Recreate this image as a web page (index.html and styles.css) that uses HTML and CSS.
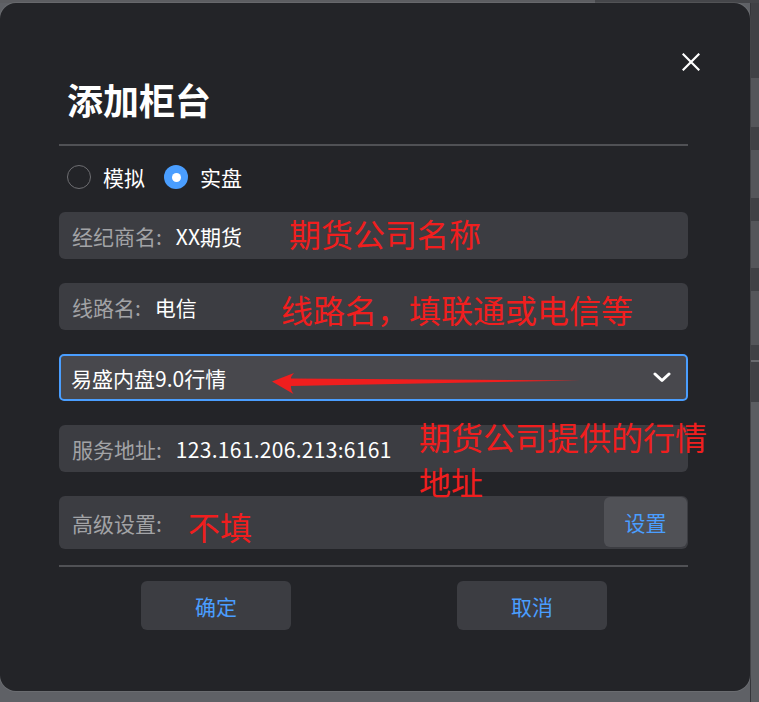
FILE: index.html
```html
<!DOCTYPE html>
<html lang="zh-CN">
<head>
<meta charset="utf-8">
<title>添加柜台</title>
<link rel="stylesheet" href="styles.css">
</head>
<body>
<div class="app">
  <div class="app-top"><div class="app-top-left"></div><div class="app-top-right"></div></div>
  <div class="app-body">
    <div class="app-main"></div>
    <div class="app-side">
      <div class="row dark r1"></div>
      <div class="row light r2"></div>
      <div class="row dark r3"></div>
      <div class="row light r4"></div>
      <div class="row dark r5"></div>
      <div class="row light r6"></div>
      <div class="row dark r7"></div>
      <div class="row light r8"></div>
      <div class="row dark r9"></div>
      <div class="row line r10"></div>
      <div class="row dark r11"></div>
      <div class="row rest"></div>
    </div>
  </div>
</div>

<div class="dialog">
  <button class="close" type="button" aria-label="关闭">
    <svg viewBox="0 0 18 18" width="18" height="18"><path d="M1.5 1.5 L16.5 16.5 M16.5 1.5 L1.5 16.5" stroke="#ffffff" stroke-width="2.2" stroke-linecap="square" fill="none"/></svg>
  </button>
  <h1 class="title">添加柜台</h1>
  <div class="rule"></div>
  <div class="radios">
    <label class="radio"><span class="circle"></span><span class="radio-text">模拟</span></label>
    <label class="radio checked"><span class="circle"></span><span class="radio-text">实盘</span></label>
  </div>
  <div class="fields">
    <div class="field"><span class="label">经纪商名:</span><span class="value">XX期货</span></div>
    <div class="field"><span class="label">线路名:</span><span class="value">电信</span></div>
    <div class="select"><span class="select-text">易盛内盘9.0行情</span>
      <svg class="chevron" viewBox="0 0 18 11" width="18" height="11"><path d="M2 2 L9 8.5 L16 2" stroke="#ffffff" stroke-width="3" fill="none" stroke-linecap="round" stroke-linejoin="round"/></svg>
    </div>
    <div class="field"><span class="label">服务地址:</span><span class="value value-addr">123.161.206.213:6161</span></div>
    <div class="field field-adv"><span class="label">高级设置:</span><button class="set-btn" type="button">设置</button></div>
  </div>
  <div class="rule rule-bottom"></div>
  <div class="actions">
    <button class="act" type="button">确定</button>
    <button class="act" type="button">取消</button>
  </div>
</div>

<div class="note note-broker">期货公司名称</div>
<div class="note note-line">线路名，填联通或电信等</div>
<div class="note note-addr">期货公司提供的行情<br>地址</div>
<div class="note note-adv">不填</div>
<svg class="arrow" viewBox="0 0 330 40" width="330" height="40">
  <path d="M7 16.5 L29 8 Q25.5 12 26 13.5 L315 15.5 L26 21 Q25.5 25 28.5 29 Z" fill="#f01e1e"/>
</svg>
</body>
</html>
```

FILE: styles.css
```css
* { box-sizing: border-box; }

html, body {
  margin: 0;
  padding: 0;
}

body {
  width: 759px;
  height: 702px;
  overflow: hidden;
  position: relative;
  background: #5f6166;
  font-family: "Noto Sans CJK SC", "Noto Sans", sans-serif;
}

/* ---------- dimmed application behind the modal ---------- */
.app {
  display: flex;
  flex-direction: column;
  height: 702px;
}
.app-top {
  display: flex;
  height: 3px;
}
.app-top-left { width: 595px; background: #5c5d61; }
.app-top-right { flex: 1; background: #45464a; }
.app-body {
  display: flex;
  flex: 1;
}
.app-main { flex: 1; background: #5f6166; }
.app-side {
  width: 9px;
  display: flex;
  flex-direction: column;
  border-left: 1px solid #35363a;
}
.row.dark { background: #404145; }
.row.light { background: #55565a; }
.row.line { background: #6a6b6f; }
.r1 { height: 75px; }
.r2 { height: 49px; }
.r3 { height: 23px; }
.r4 { height: 48px; }
.r5 { height: 23px; }
.r6 { height: 47px; }
.r7 { height: 23px; }
.r8 { height: 54px; }
.r9 { height: 15px; }
.r10 { height: 2px; }
.r11 { height: 40px; }
.rest { flex: 1; background: #5b5d61; }

/* ---------- dialog ---------- */
.dialog {
  position: absolute;
  left: 0;
  top: 3px;
  width: 750px;
  height: 688px;
  border-radius: 16px;
  background: #232428;
  box-shadow: 0 0 0 1px rgba(255, 255, 255, 0.07);
  padding: 0 62px 0 59px;
  display: flex;
  flex-direction: column;
}

.close {
  position: absolute;
  right: 50px;
  top: 50px;
  width: 18px;
  height: 18px;
  padding: 0;
  border: 0;
  background: transparent;
  display: flex;
}

.title {
  margin: 74px 0 23px 0;
  padding-left: 8px;
  height: 44px;
  font-size: 36px;
  line-height: 44px;
  font-weight: 700;
  color: #ffffff;
}

.rule {
  height: 2px;
  background: #505155;
}

.radios {
  margin-top: 19px;
  height: 24px;
  display: flex;
  align-items: center;
  padding-left: 8px;
}
.radio {
  display: flex;
  align-items: center;
  margin-right: 19px;
}
.circle {
  width: 24px;
  height: 24px;
  border-radius: 50%;
  border: 1.5px solid #6e6e72;
  margin-right: 12px;
  display: flex;
  align-items: center;
  justify-content: center;
}
.radio.checked .circle {
  border: 0;
  background: #4a9eff;
}
.radio.checked .circle::after {
  content: "";
  width: 9px;
  height: 9px;
  border-radius: 50%;
  background: #ffffff;
}
.radio-text {
  font-size: 21px;
  line-height: 24px;
  color: #ffffff;
}

.fields {
  margin-top: 23px;
  display: flex;
  flex-direction: column;
  gap: 24px;
}

.field {
  height: 47px;
  border-radius: 6px;
  background: #3c3d42;
  display: flex;
  align-items: center;
  padding-left: 13px;
}
.field-adv {
  height: 53px;
  padding-right: 1px;
}
.label {
  font-size: 21px;
  color: #a2a3a6;
  margin-right: 14px;
}
.value {
  font-size: 21px;
  color: #ffffff;
}
.value-addr {
  letter-spacing: 0.3px;
}

.set-btn {
  margin-left: auto;
  width: 83px;
  height: 50px;
  margin-top: -1px;
  border: 0;
  border-radius: 6px;
  background: #505156;
  color: #4a9eff;
  font-family: inherit;
  font-size: 21px;
  padding: 0;
}

.select {
  height: 47px;
  border: 2px solid #4a9eff;
  border-radius: 5px;
  background: #48484d;
  display: flex;
  align-items: center;
  padding: 0 15px 0 10px;
}
.select-text {
  font-size: 21px;
  color: #ffffff;
}
.chevron {
  margin-left: auto;
}

.rule-bottom {
  margin-top: 16px;
}

.actions {
  margin-top: 14px;
  display: flex;
  justify-content: space-between;
  padding: 0 81px 0 82px;
}
.act {
  width: 150px;
  height: 49px;
  border: 0;
  border-radius: 6px;
  background: #3c3d42;
  color: #4a9eff;
  font-family: inherit;
  font-size: 21px;
  padding: 0;
}

/* ---------- red annotations drawn over the screenshot ---------- */
.note {
  position: absolute;
  font-size: 32px;
  line-height: 45px;
  color: #f01e1e;
  white-space: nowrap;
}
.note-broker { left: 289px; top: 211px; }
.note-line { left: 281px; top: 287px; }
.note-addr { left: 419px; top: 414px; }
.note-adv { left: 188px; top: 504px; }

.arrow {
  position: absolute;
  left: 265px;
  top: 365px;
}
```
